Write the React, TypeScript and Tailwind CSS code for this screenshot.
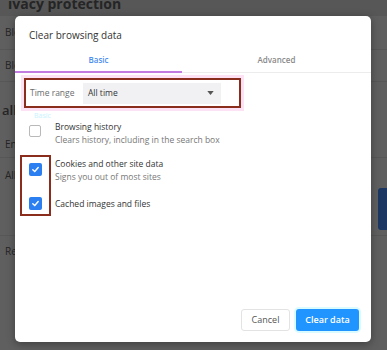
import React from "react";

const font = { fontFamily: '"Open Sans", "Noto Sans", Arial, sans-serif' };

function Check({ checked }: { checked: boolean }) {
  if (!checked) {
    return <div className="h-[12px] w-[12px] rounded-[2px] border border-[#b9b9b9] bg-white" />;
  }
  return (
    <div className="flex h-[13px] w-[13px] items-center justify-center rounded-[2px] bg-[#2b7ff0]">
      <svg width="9" height="9" viewBox="0 0 10 10">
        <path d="M2 5.2 L4.2 7.2 L8 2.8" fill="none" stroke="white" strokeWidth="1.6" strokeLinecap="round" />
      </svg>
    </div>
  );
}

export default function App() {
  return (
    <div className="relative h-[350px] w-[387px] overflow-hidden bg-[#5f5f5f]" style={font}>
      {/* page behind the overlay */}
      <div className="text-[#252525]">
        <div className="h-[16px] overflow-hidden whitespace-nowrap bg-[#575757] pl-[8px] text-[14px] font-bold leading-[8px]">ivacy protection</div>
        <div className="flex h-[34px] items-center border-b border-[#575757] pl-[5px] text-[10px]">Blo</div>
        <div className="flex h-[32px] items-center border-b border-[#575757] pl-[5px] text-[10px]">Blo</div>
        <div className="flex h-[40px] items-center pl-[2px] pt-[18px] text-[13px] font-semibold">allp</div>
        <div className="flex h-[36px] items-center border-b border-[#575757] pl-[5px] pt-[10px] text-[10px]">En</div>
        <div className="flex h-[34px] items-center pl-[5px] text-[10px]">All</div>
        <div className="h-[44px] border-b border-[#575757]" />
        <div className="flex h-[30px] items-center pl-[5px] text-[10px]">Re</div>
      </div>
      <div className="absolute left-[378px] top-[188px] h-[42px] w-[12px] rounded-[3px] bg-[#1d3763]" />

      {/* dialog */}
      <div className="absolute left-[15px] top-[16px] flex h-[326px] w-[356px] flex-col rounded-[5px] bg-white shadow-[0_2px_8px_rgba(0,0,0,0.35)]">
        <div className="pl-[14px] pt-[9px] text-[10px] leading-[20px] text-[#333]">Clear browsing data</div>
        <div className="mt-[6px] flex h-[22px] text-[8px] font-semibold">
          <div className="flex w-[167px] items-start justify-center border-b-2 border-[#c27be0] pt-[3px] text-[#4a8ef0]">Basic</div>
          <div className="flex flex-1 items-start justify-center border-b border-[#ececec] pt-[3px] text-[#8a8a8a]">Advanced</div>
        </div>
        <div className="ml-[9px] mt-[5px] flex h-[30px] w-[217px] items-center border-2 border-[#8b2d1c] pl-[4px] shadow-[0_0_0_3px_#fde2f6]">
          <span className="w-[53px] shrink-0 whitespace-nowrap text-[8.5px] text-[#6b6b6b]">Time range</span>
          <div className="flex h-[21px] w-[138px] shrink-0 items-center justify-between bg-[#f1f1f3] pl-[5px] pr-[7px] text-[8.5px] text-[#333]">
            <span>All time</span>
            <svg width="7" height="4" viewBox="0 0 8 5"><path d="M0 0 H8 L4 5 Z" fill="#555" /></svg>
          </div>
        </div>
        <div className="ml-[19px] mt-[3px] text-[7px] leading-[9px] text-[#c8f3ff]">Basic</div>
        <div className="flex items-start">
          <div className="ml-[14px] mt-[5px] w-[26px]"><Check checked={false} /></div>
          <div className="text-[8.5px] leading-[13px]">
            <div className="text-[#333]">Browsing history</div>
            <div className="text-[#777]">Clears history, including in the search box</div>
          </div>
        </div>
        <div className="relative mt-[11px]">
          <div className="absolute left-[5px] top-[-2px] h-[61px] w-[31px] border-2 border-[#8b2d1c]" />
          <div className="flex items-start">
            <div className="ml-[14px] mt-[6px] w-[26px]"><Check checked /></div>
            <div className="text-[8.5px] leading-[13px]">
              <div className="text-[#333]">Cookies and other site data</div>
              <div className="text-[#777]">Signs you out of most sites</div>
            </div>
          </div>
          <div className="mt-[14px] flex h-[13px] items-center">
            <div className="ml-[14px] w-[26px]"><Check checked /></div>
            <div className="text-[8.5px] leading-[13px] text-[#333]">Cached images and files</div>
          </div>
        </div>
        <div className="mt-auto flex justify-end gap-[6px] pb-[11px] pr-[12px]">
          <button className="h-[22px] w-[49px] rounded-[3px] border border-[#e3e3e3] bg-white text-[9px] text-[#555]">Cancel</button>
          <button className="h-[22px] w-[63px] rounded-[3px] bg-[#2095ff] text-[9px] font-semibold text-white shadow-[0_0_0_2px_#dafbff]">Clear data</button>
        </div>
      </div>
    </div>
  );
}
